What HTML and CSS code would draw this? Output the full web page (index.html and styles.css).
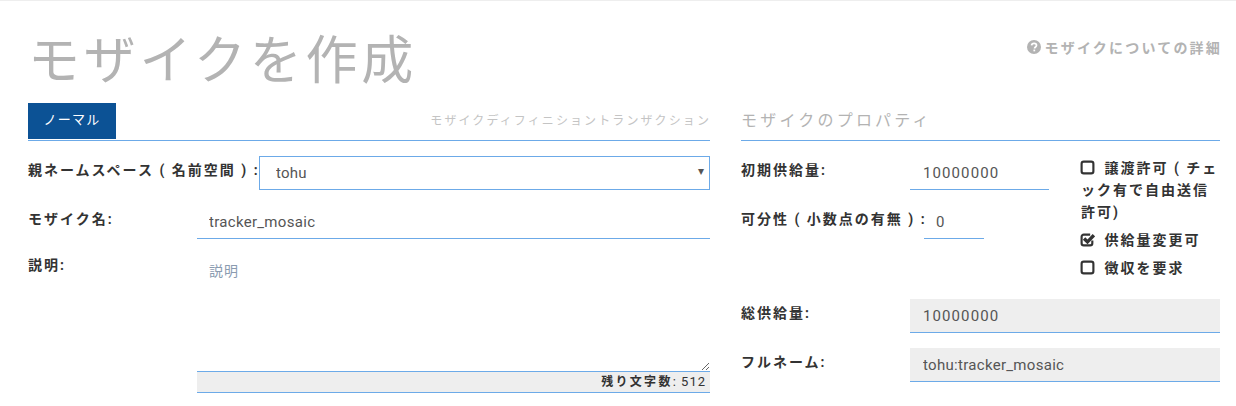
FILE: index.html
```html
<!DOCTYPE html>
<html lang="ja">
<head>
    <meta charset="UTF-8">
    <title>モザイクを作成</title>
    <link rel="stylesheet" href="styles.css">
</head>
<body>
    <div class="page">
        <header class="page-head">
            <h1>モザイクを作成</h1>
            <a class="about-link" href="#">
                <svg class="about-icon" viewBox="0 0 24 24" width="14" height="14">
                    <circle cx="12" cy="12" r="12" fill="#b3b3b3"/>
                    <path d="M7.8 9.2c.3-2.4 2-3.6 4.3-3.6 2.400 0 4.200 1.400 4.200 3.500 0 2.900-3.300 2.900-3.300 5.400" fill="none" stroke="#fff" stroke-width="3"/>
                    <rect x="11" y="16.400" width="3" height="3" fill="#fff"/>
                </svg>
                モザイクについての詳細
            </a>
        </header>

        <div class="columns">
            <section class="col-left">
                <div class="tabs">
                    <a class="tab active" href="#">ノーマル</a>
                    <a class="tab-other" href="#">モザイクディフィニショントランザクション</a>
                </div>

                <div class="row row-parent">
                    <label class="field-label parent-label">親ネームスペース ( 名前空間 ) :</label>
                    <div class="select-wrap">
                        <select class="select">
                            <option>tohu</option>
                        </select>
                    </div>
                </div>

                <div class="row row-name">
                    <label class="field-label name-label">モザイク名:</label>
                    <input class="input name-input" type="text" value="tracker_mosaic">
                </div>

                <div class="row row-desc">
                    <label class="field-label name-label">説明:</label>
                    <div class="desc-box">
                        <textarea class="textarea" placeholder="説明"></textarea>
                        <div class="char-count"><b>残り文字数</b><span class="count-num">: 512</span></div>
                    </div>
                </div>
            </section>

            <section class="col-right">
                <h2 class="props-title">モザイクのプロパティ</h2>

                <div class="props-top">
                    <div class="props-fields">
                        <div class="row supply-row">
                            <label class="field-label prop-label">初期供給量:</label>
                            <input class="input supply-input digits" type="text" value="10000000">
                        </div>
                        <div class="row div-row">
                            <label class="field-label div-label">可分性 ( 小数点の有無 ) :</label>
                            <input class="input div-input digits" type="text" value="0">
                        </div>
                    </div>

                    <div class="checks">
                        <div class="check check-first">
                            <svg class="box" viewBox="0 0 14 14" width="15" height="15">
                                <rect x="1.500" y="1.500" width="11" height="11" rx="2" fill="none" stroke="#333" stroke-width="2"/>
                            </svg>
                            譲渡許可 ( チェック有で自由送信許可)
                        </div>
                        <div class="check">
                            <svg class="box" viewBox="0 0 14 14" width="15" height="15">
                                <path d="M11.500 8v2.500a2 2 0 0 1-2 2H3.500a2 2 0 0 1-2-2V4.500a2 2 0 0 1 2-2h6" fill="none" stroke="#333" stroke-width="2"/>
                                <path d="M3.800 6 7 9.200 13 3" fill="none" stroke="#333" stroke-width="3.200"/>
                            </svg>
                            供給量変更可
                        </div>
                        <div class="check">
                            <svg class="box" viewBox="0 0 14 14" width="15" height="15">
                                <rect x="1.500" y="1.500" width="11" height="11" rx="2" fill="none" stroke="#333" stroke-width="2"/>
                            </svg>
                            徴収を要求
                        </div>
                    </div>
                </div>

                <div class="row total-row">
                    <label class="field-label prop-label">総供給量:</label>
                    <input class="input readonly digits" type="text" value="10000000" readonly>
                </div>
                <div class="row total-row fullname-row">
                    <label class="field-label prop-label">フルネーム:</label>
                    <input class="input readonly" type="text" value="tohu:tracker_mosaic" readonly>
                </div>
            </section>
        </div>
    </div>
</body>
</html>
```
FILE: styles.css
```css
* {
    box-sizing: border-box;
}
html, body {
    height: 100%;
}
body {
    margin: 0;
    background: #fff;
    color: #333;
    font-family: Roboto, "Noto Sans CJK JP", sans-serif;
    font-size: 14px;
    overflow: hidden;
}
.page {
    border-top: 1px solid #eee;
    padding: 0 16px 0 28px;
}
.page-head {
    display: flex;
    justify-content: space-between;
    height: 102px;
}
h1 {
    margin: 25px 0 0;
    color: #b3b3b3;
    font-size: 52px;
    font-weight: 400;
    line-height: 72px;
    letter-spacing: 3.700px;
}
.about-link {
    margin-top: 36px;
    height: 20px;
    display: flex;
    align-items: center;
    gap: 4px;
    color: #b3b3b3;
    font-size: 14px;
    font-weight: 700;
    letter-spacing: 2.200px;
    margin-right: -2px;
    text-decoration: none;
}
.columns {
    display: flex;
    gap: 31px;
}
.col-left {
    width: 682px;
}
.col-right {
    width: 479px;
}
.tabs {
    display: flex;
    justify-content: space-between;
    height: 38px;
    border-bottom: 1px solid #6caae8;
}
.tab {
    width: 88px;
    height: 36px;
    background: #0c5295;
    color: #fff;
    font-size: 13px;
    line-height: 34px;
    letter-spacing: 1.300px;
    text-align: center;
    text-decoration: none;
}
.tab-other {
    color: #c4c4c4;
    font-size: 12px;
    line-height: 36px;
    letter-spacing: 2.100px;
    margin-right: -1px;
    text-decoration: none;
}
.row {
    display: flex;
    align-items: center;
}
.field-label {
    padding-bottom: 8px;
    font-weight: 700;
    font-size: 14px;
    letter-spacing: 2px;
    white-space: nowrap;
}
.parent-label {
    width: 231px;
    flex: none;
}
.row-parent {
    margin-top: 15px;
}
.select-wrap {
    position: relative;
    flex: 1;
}
.select-wrap::after {
    content: "▾";
    position: absolute;
    right: 6px;
    top: 8px;
    font-size: 12px;
    color: #555;
}
.select {
    display: block;
    width: 100%;
    height: 34px;
    padding: 0 16px;
    border: 1px solid #6caae8;
    border-radius: 0;
    background: #fff;
    color: #555;
    font-family: inherit;
    font-size: 15px;
    letter-spacing: 0.200px;
    appearance: none;
}
.input {
    height: 34px;
    padding: 0 12px;
    border: 0;
    border-bottom: 1px solid #6caae8;
    border-radius: 0;
    outline: none;
    background: transparent;
    color: #555;
    font-family: inherit;
    font-size: 15px;
    letter-spacing: 0.300px;
}
.input.digits {
    letter-spacing: 1.100px;
}
.total-row .input, .supply-input {
    padding-left: 13px;
}
.row-name {
    margin-top: 15px;
}
.name-label {
    width: 169px;
    flex: none;
}
.name-input {
    flex: 1;
}
.row-desc {
    margin-top: 16px;
    align-items: flex-start;
}
.row-desc .name-label {
    padding-bottom: 0;
    line-height: 20px;
}
.desc-box {
    flex: 1;
}
.textarea {
    display: block;
    width: 100%;
    height: 116px;
    padding: 5px 12px;
    border: 0;
    outline: none;
    background: transparent;
    font-family: inherit;
    font-size: 14px;
    letter-spacing: 1px;
    resize: vertical;
}
.textarea::placeholder {
    color: #8a9bb0;
}
.char-count {
    height: 22px;
    padding-right: 4px;
    border-top: 1px solid #6caae8;
    border-bottom: 1px solid #6caae8;
    background: #eee;
    font-size: 12px;
    line-height: 20px;
    letter-spacing: 2.300px;
    text-align: right;
}
.count-num {
    font-size: 13px;
    letter-spacing: 1px;
}
.props-title {
    height: 38px;
    margin: 0;
    border-bottom: 1px solid #6caae8;
    color: #b3b3b3;
    font-size: 16px;
    font-weight: 400;
    line-height: 36px;
    letter-spacing: 3.200px;
}
.props-top {
    display: flex;
    height: 158px;
}
.props-fields {
    width: 340px;
}
.prop-label {
    width: 169px;
    flex: none;
}
.supply-row {
    margin-top: 15px;
}
.supply-input {
    width: 139px;
}
.div-row {
    margin-top: 15px;
}
.div-label {
    width: 183px;
    flex: none;
}
.div-input {
    width: 60px;
}
.checks {
    width: 139px;
    font-weight: 700;
    font-size: 14px;
    letter-spacing: 2px;
    line-height: 22px;
}
.check {
    margin-bottom: 6px;
}
.check-first {
    margin-top: 16px;
}
.box {
    vertical-align: -2px;
    margin-left: -1px;
    margin-right: 4px;
}
.total-row .input {
    flex: 1;
}
.readonly {
    background: #eee;
}
.fullname-row {
    margin-top: 15px;
}
```
